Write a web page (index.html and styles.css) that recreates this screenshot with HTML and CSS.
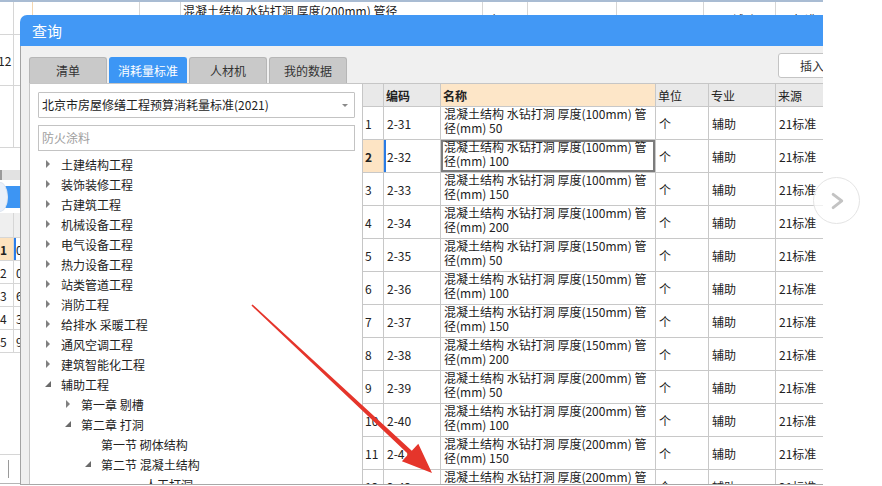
FILE: index.html
```html
<!DOCTYPE html>
<html lang="zh">
<head>
<meta charset="utf-8">
<title>查询</title>
<link rel="stylesheet" href="styles.css">
</head>
<body>
<div class="screen">
  <div class="bg">
    <div class="bg-top">
      <div class="c c0"></div>
      <div class="c c1"></div>
      <div class="c c2"><span class="pk pk2">2-42</span></div>
      <div class="c c3"><span class="pk pk3">项</span></div>
      <div class="c c4 top">混凝土结构 水钻打洞 厚度(200mm) 管径<br>(mm) 200</div>
      <div class="c c5"><span class="pk pk5">个</span></div>
      <div class="c c6"></div>
      <div class="c c7"></div>
      <div class="c c8"><span class="pk pk8">辅助</span></div>
      <div class="c c9"><span class="pk pk9">21标准</span></div>
    </div>
    <div class="bg-side">
      <div class="s-row s-12"><span class="s0"><span class="s-num">12</span></span><span class="s1"></span></div>
      <div class="s-row s-blank"><span class="s0"></span><span class="s1"></span></div>
      <div class="s-gap"></div>
      <div class="s-bar"></div>
      <div class="s-pill"><span class="s-circle"></span><span class="s-blue"></span></div>
      <div class="s-row s-head"><span class="s0"></span><span class="s1"></span></div>
      <div class="s-row s-r s-sel"><span class="s0">1</span><span class="s1">0</span></div>
      <div class="s-row s-r"><span class="s0">2</span><span class="s1">0</span></div>
      <div class="s-row s-r"><span class="s0">3</span><span class="s1">6</span></div>
      <div class="s-row s-r"><span class="s0">4</span><span class="s1">3</span></div>
      <div class="s-row s-r"><span class="s0">5</span><span class="s1">9</span></div>
      <div class="s-empty"></div>
      <div class="s-cursor"><span class="caret-line"></span></div>
    </div>
  </div>

  <div class="dialog">
    <div class="dlg-title">查询</div>
    <div class="dlg-body">
      <div class="tabbar">
        <div class="tab">清单</div>
        <div class="tab active">消耗量标准</div>
        <div class="tab">人材机</div>
        <div class="tab">我的数据</div>
        <div class="insert-btn">插入</div>
      </div>
      <div class="content">
        <div class="tree-panel">
          <div class="select">北京市房屋修缮工程预算消耗量标准(2021)<span class="sel-caret"></span></div>
          <div class="search">防火涂料</div>
          <ul class="tree">
            <li class="node l1"><i class="tw closed"></i>土建结构工程</li>
            <li class="node l1"><i class="tw closed"></i>装饰装修工程</li>
            <li class="node l1"><i class="tw closed"></i>古建筑工程</li>
            <li class="node l1"><i class="tw closed"></i>机械设备工程</li>
            <li class="node l1"><i class="tw closed"></i>电气设备工程</li>
            <li class="node l1"><i class="tw closed"></i>热力设备工程</li>
            <li class="node l1"><i class="tw closed"></i>站类管道工程</li>
            <li class="node l1"><i class="tw closed"></i>消防工程</li>
            <li class="node l1"><i class="tw closed"></i>给排水 采暖工程</li>
            <li class="node l1"><i class="tw closed"></i>通风空调工程</li>
            <li class="node l1"><i class="tw closed"></i>建筑智能化工程</li>
            <li class="node l1"><i class="tw open"></i>辅助工程</li>
            <li class="node l2"><i class="tw closed"></i>第一章 剔槽</li>
            <li class="node l2"><i class="tw open"></i>第二章 打洞</li>
            <li class="node l3"><i class="tw"></i>第一节 砌体结构</li>
            <li class="node l3"><i class="tw open"></i>第二节 混凝土结构</li>
            <li class="node l4"><i class="tw"></i>一、人工打洞</li>
          </ul>
        </div>
        <div class="grid-wrap">
          <div class="g-row g-head">
            <div class="g-c"></div>
            <div class="g-c b">编码</div>
            <div class="g-c b hl">名称</div>
            <div class="g-c">单位</div>
            <div class="g-c">专业</div>
            <div class="g-c">来源</div>
          </div>
          <div class="g-row"><div class="g-c n">1</div><div class="g-c">2-31</div><div class="g-c nm">混凝土结构 水钻打洞 厚度(100mm) 管<br>径(mm) 50</div><div class="g-c">个</div><div class="g-c">辅助</div><div class="g-c">21标准</div></div>
          <div class="g-row sel"><div class="g-c n">2</div><div class="g-c code">2-32</div><div class="g-c nm">混凝土结构 水钻打洞 厚度(100mm) 管<br>径(mm) 100</div><div class="g-c">个</div><div class="g-c">辅助</div><div class="g-c">21标准</div></div>
          <div class="g-row"><div class="g-c n">3</div><div class="g-c">2-33</div><div class="g-c nm">混凝土结构 水钻打洞 厚度(100mm) 管<br>径(mm) 150</div><div class="g-c">个</div><div class="g-c">辅助</div><div class="g-c">21标准</div></div>
          <div class="g-row"><div class="g-c n">4</div><div class="g-c">2-34</div><div class="g-c nm">混凝土结构 水钻打洞 厚度(100mm) 管<br>径(mm) 200</div><div class="g-c">个</div><div class="g-c">辅助</div><div class="g-c">21标准</div></div>
          <div class="g-row"><div class="g-c n">5</div><div class="g-c">2-35</div><div class="g-c nm">混凝土结构 水钻打洞 厚度(150mm) 管<br>径(mm) 50</div><div class="g-c">个</div><div class="g-c">辅助</div><div class="g-c">21标准</div></div>
          <div class="g-row"><div class="g-c n">6</div><div class="g-c">2-36</div><div class="g-c nm">混凝土结构 水钻打洞 厚度(150mm) 管<br>径(mm) 100</div><div class="g-c">个</div><div class="g-c">辅助</div><div class="g-c">21标准</div></div>
          <div class="g-row"><div class="g-c n">7</div><div class="g-c">2-37</div><div class="g-c nm">混凝土结构 水钻打洞 厚度(150mm) 管<br>径(mm) 150</div><div class="g-c">个</div><div class="g-c">辅助</div><div class="g-c">21标准</div></div>
          <div class="g-row"><div class="g-c n">8</div><div class="g-c">2-38</div><div class="g-c nm">混凝土结构 水钻打洞 厚度(150mm) 管<br>径(mm) 200</div><div class="g-c">个</div><div class="g-c">辅助</div><div class="g-c">21标准</div></div>
          <div class="g-row"><div class="g-c n">9</div><div class="g-c">2-39</div><div class="g-c nm">混凝土结构 水钻打洞 厚度(200mm) 管<br>径(mm) 50</div><div class="g-c">个</div><div class="g-c">辅助</div><div class="g-c">21标准</div></div>
          <div class="g-row"><div class="g-c n">10</div><div class="g-c">2-40</div><div class="g-c nm">混凝土结构 水钻打洞 厚度(200mm) 管<br>径(mm) 100</div><div class="g-c">个</div><div class="g-c">辅助</div><div class="g-c">21标准</div></div>
          <div class="g-row"><div class="g-c n">11</div><div class="g-c">2-41</div><div class="g-c nm">混凝土结构 水钻打洞 厚度(200mm) 管<br>径(mm) 150</div><div class="g-c">个</div><div class="g-c">辅助</div><div class="g-c">21标准</div></div>
          <div class="g-row"><div class="g-c n">12</div><div class="g-c">2-42</div><div class="g-c nm">混凝土结构 水钻打洞 厚度(200mm) 管<br>径(mm) 200</div><div class="g-c">个</div><div class="g-c">辅助</div><div class="g-c">21标准</div></div>
        </div>
      </div>
    </div>
  </div>

  <div class="next-btn">
    <svg width="47" height="47" viewBox="0 0 47 47"><polyline points="20,17 29,24 20,31" fill="none" stroke="#c3c3c3" stroke-width="3" stroke-linecap="round" stroke-linejoin="round"/></svg>
  </div>

  <svg class="arrow" width="882" height="486" viewBox="0 0 882 486">
    <polygon points="252.55,304.42 411.81,450.67 418.3,443.7 432,473 401.9,461.3 408.39,454.33 251.45,305.58" fill="#e5352b"/>
  </svg>
</div>
</body>
</html>
```

FILE: styles.css
```css
* { box-sizing: border-box; margin: 0; padding: 0; }
html, body { width: 882px; height: 486px; overflow: hidden; background: #fff; }
body { font-family: "Noto Sans CJK SC", "Noto Sans", sans-serif; font-size: 12px; color: #222; }

.screen { position: relative; width: 882px; height: 486px; overflow: hidden; }

/* background application */
.bg { width: 823px; height: 486px; }
.bg-top { display: flex; height: 35px; border-top: 2px solid #a9bcd3; border-bottom: 1px solid #d6d6d6; }
.bg-top .c { border-right: 1px solid #d6d6d6; height: 100%; overflow: hidden; display: flex; align-items: center; line-height: 14px; white-space: nowrap; }
.bg-top .c.top { align-items: flex-start; padding: 2px 2px 0; }
.c0 { width: 14px; }
.c1 { width: 19px; border-right-color: #f3d6b0 !important; }
.c2 { width: 107px; }
.c3 { width: 41px; }
.c4 { width: 302px; }
.c5 { width: 45px; }
.c6 { width: 89px; }
.c7 { width: 87px; }
.c8 { width: 72px; }
.c9 { width: 47px; border-right: none !important; }
.pk { padding-top: 4px; }
.pk2 { padding-left: 20px; }
.pk3 { padding-left: 16px; }
.pk5 { padding-left: 5px; }
.pk8 { padding-left: 28px; }
.pk9 { padding-left: 4px; }

.bg-side { width: 30px; display: flex; flex-direction: column; }
.s-row { display: flex; border-bottom: 1px solid #d6d6d6; }
.s0 { width: 14px; border-right: 1px solid #d6d6d6; display: flex; align-items: center; overflow: hidden; font-size: 12px; }
.s1 { flex: 1; display: flex; align-items: center; padding-left: 2px; overflow: hidden; }
.s-12 { height: 51px; }
.s-num { margin-left: -2px; }
.s-blank { height: 62px; }
.s-gap { height: 22px; }
.s-bar { height: 10px; background: #e2e2e2; border-left: 2px solid #9a9a9a; }
.s-pill { height: 33px; position: relative; display: flex; align-items: center; }
.s-circle { width: 16px; height: 30px; margin-left: -8px; border-radius: 50%; background: #eaf0f9; border: 1px solid #dde5f0; z-index: 1; }
.s-blue { width: 24px; height: 22px; margin-left: -9px; background: #3d95f3; border-radius: 4px 0 0 4px; }
.s-head { height: 25px; background: #efefef; }
.s-r { height: 23px; }
.s-sel .s0 { background: #fde2be; font-weight: bold; }
.s-sel .s1 { border-left: 2px solid #2b7de9; padding-left: 0; }
.s-empty { height: 102px; border-bottom: 1px solid #d6d6d6; }
.s-cursor { height: 29px; border-bottom: 1px solid #b5b5b5; padding: 5px 0 0 8px; }
.caret-line { display: block; width: 1px; height: 18px; background: #9a9a9a; }

/* dialog */
.dialog { position: absolute; left: 20px; top: 15px; width: 803px; height: 470px; overflow: hidden; display: flex; flex-direction: column; }
.dlg-title { height: 31px; background: #4298f5; color: #fff; font-size: 15px; line-height: 31px; padding-left: 12px; border-radius: 7px 0 0 0; }
.dlg-body { flex: 1; background: #f0f0f0; border-left: 1px solid #a3a3a3; border-bottom: 1px solid #a8a8a8; padding: 7px 0 0 8px; display: flex; flex-direction: column; overflow: hidden; }

.tabbar { height: 30px; display: flex; gap: 2px; flex: none; }
.tab { align-self: flex-end; width: 78px; height: 26px; background: #c9c9c9; border: 1px solid #b6b6b6; border-bottom: none; border-radius: 3px 3px 0 0; text-align: center; line-height: 25px; font-size: 12px; color: #333; }
.tab.active { background: #3c96f5; border-color: #3c96f5; color: #fff; }
.insert-btn { align-self: flex-start; margin-left: auto; margin-right: -8px; width: 53px; height: 25px; background: #fff; border: 1px solid #c4c4c4; border-radius: 3px; font-size: 12px; line-height: 23px; padding-left: 21px; color: #333; }

.content { flex: 1; display: flex; overflow: hidden; }
.tree-panel { width: 334px; flex: none; background: #fff; border: 1px solid #c6c6c6; border-bottom: none; padding: 8px 7px 0 8px; }
.select { height: 26px; border: 1px solid #c3c3c3; border-radius: 1px; line-height: 24px; padding-left: 3px; position: relative; white-space: nowrap; color: #222; }
.sel-caret { position: absolute; right: 6px; top: 11px; width: 0; height: 0; border-left: 3px solid transparent; border-right: 3px solid transparent; border-top: 3px solid #8a8a8a; }
.search { margin-top: 7px; height: 26px; border: 1px solid #c3c3c3; line-height: 24px; padding-left: 3px; color: #9e9e9e; }
.tree { list-style: none; margin-top: 3px; margin-left: -8px; }
.node { height: 20px; display: flex; align-items: center; white-space: nowrap; color: #222; font-size: 12px; }
.l1 { padding-left: 15px; }
.l2 { padding-left: 35px; }
.l3 { padding-left: 55px; }
.l4 { padding-left: 75px; }
.tw { width: 16px; height: 20px; flex: none; position: relative; }
.tw.closed::before { content: ""; position: absolute; left: 1px; top: 6px; border-left: 4px solid #808080; border-top: 4px solid transparent; border-bottom: 4px solid transparent; }
.tw.open::before { content: ""; position: absolute; left: 0; top: 7px; border-bottom: 6px solid #6a6a6a; border-left: 6px solid transparent; }

.grid-wrap { flex: 1; background: #fff; border-top: 1px solid #c6c6c6; overflow: hidden; }
.g-row { display: grid; grid-template-columns: 21px 57px 215px 53px 67px 80px; height: 33px; }
.g-c { border-right: 1px solid #c8c8c8; border-bottom: 1px solid #c8c8c8; padding: 0 3px; display: flex; align-items: center; white-space: nowrap; overflow: hidden; font-size: 12px; color: #222; }
.g-head { height: 23px; background: #e9e9e9; }
.g-head .g-c { padding: 0 2px; }
.g-c.b { font-weight: bold; }
.g-c.hl { background: #fde6c8; }
.g-c.n { padding: 0 2px; }
.g-c.nm { align-items: flex-start; line-height: 14px; padding-top: 0; }
.sel .n { background: #fde4c4; font-weight: bold; }
.sel .code { box-shadow: inset 2px 0 0 #2a7be4; }
.sel .nm { box-shadow: inset 0 0 0 2px #7c7c7c; }

/* overlays */
.next-btn { position: absolute; left: 813px; top: 177px; width: 47px; height: 47px; border-radius: 50%; border: 1px solid #e4e4e4; background: rgba(255,255,255,0.72); display: flex; align-items: center; justify-content: center; }
.next-btn svg { display: block; }
.arrow { position: absolute; left: 0; top: 0; pointer-events: none; }
```
